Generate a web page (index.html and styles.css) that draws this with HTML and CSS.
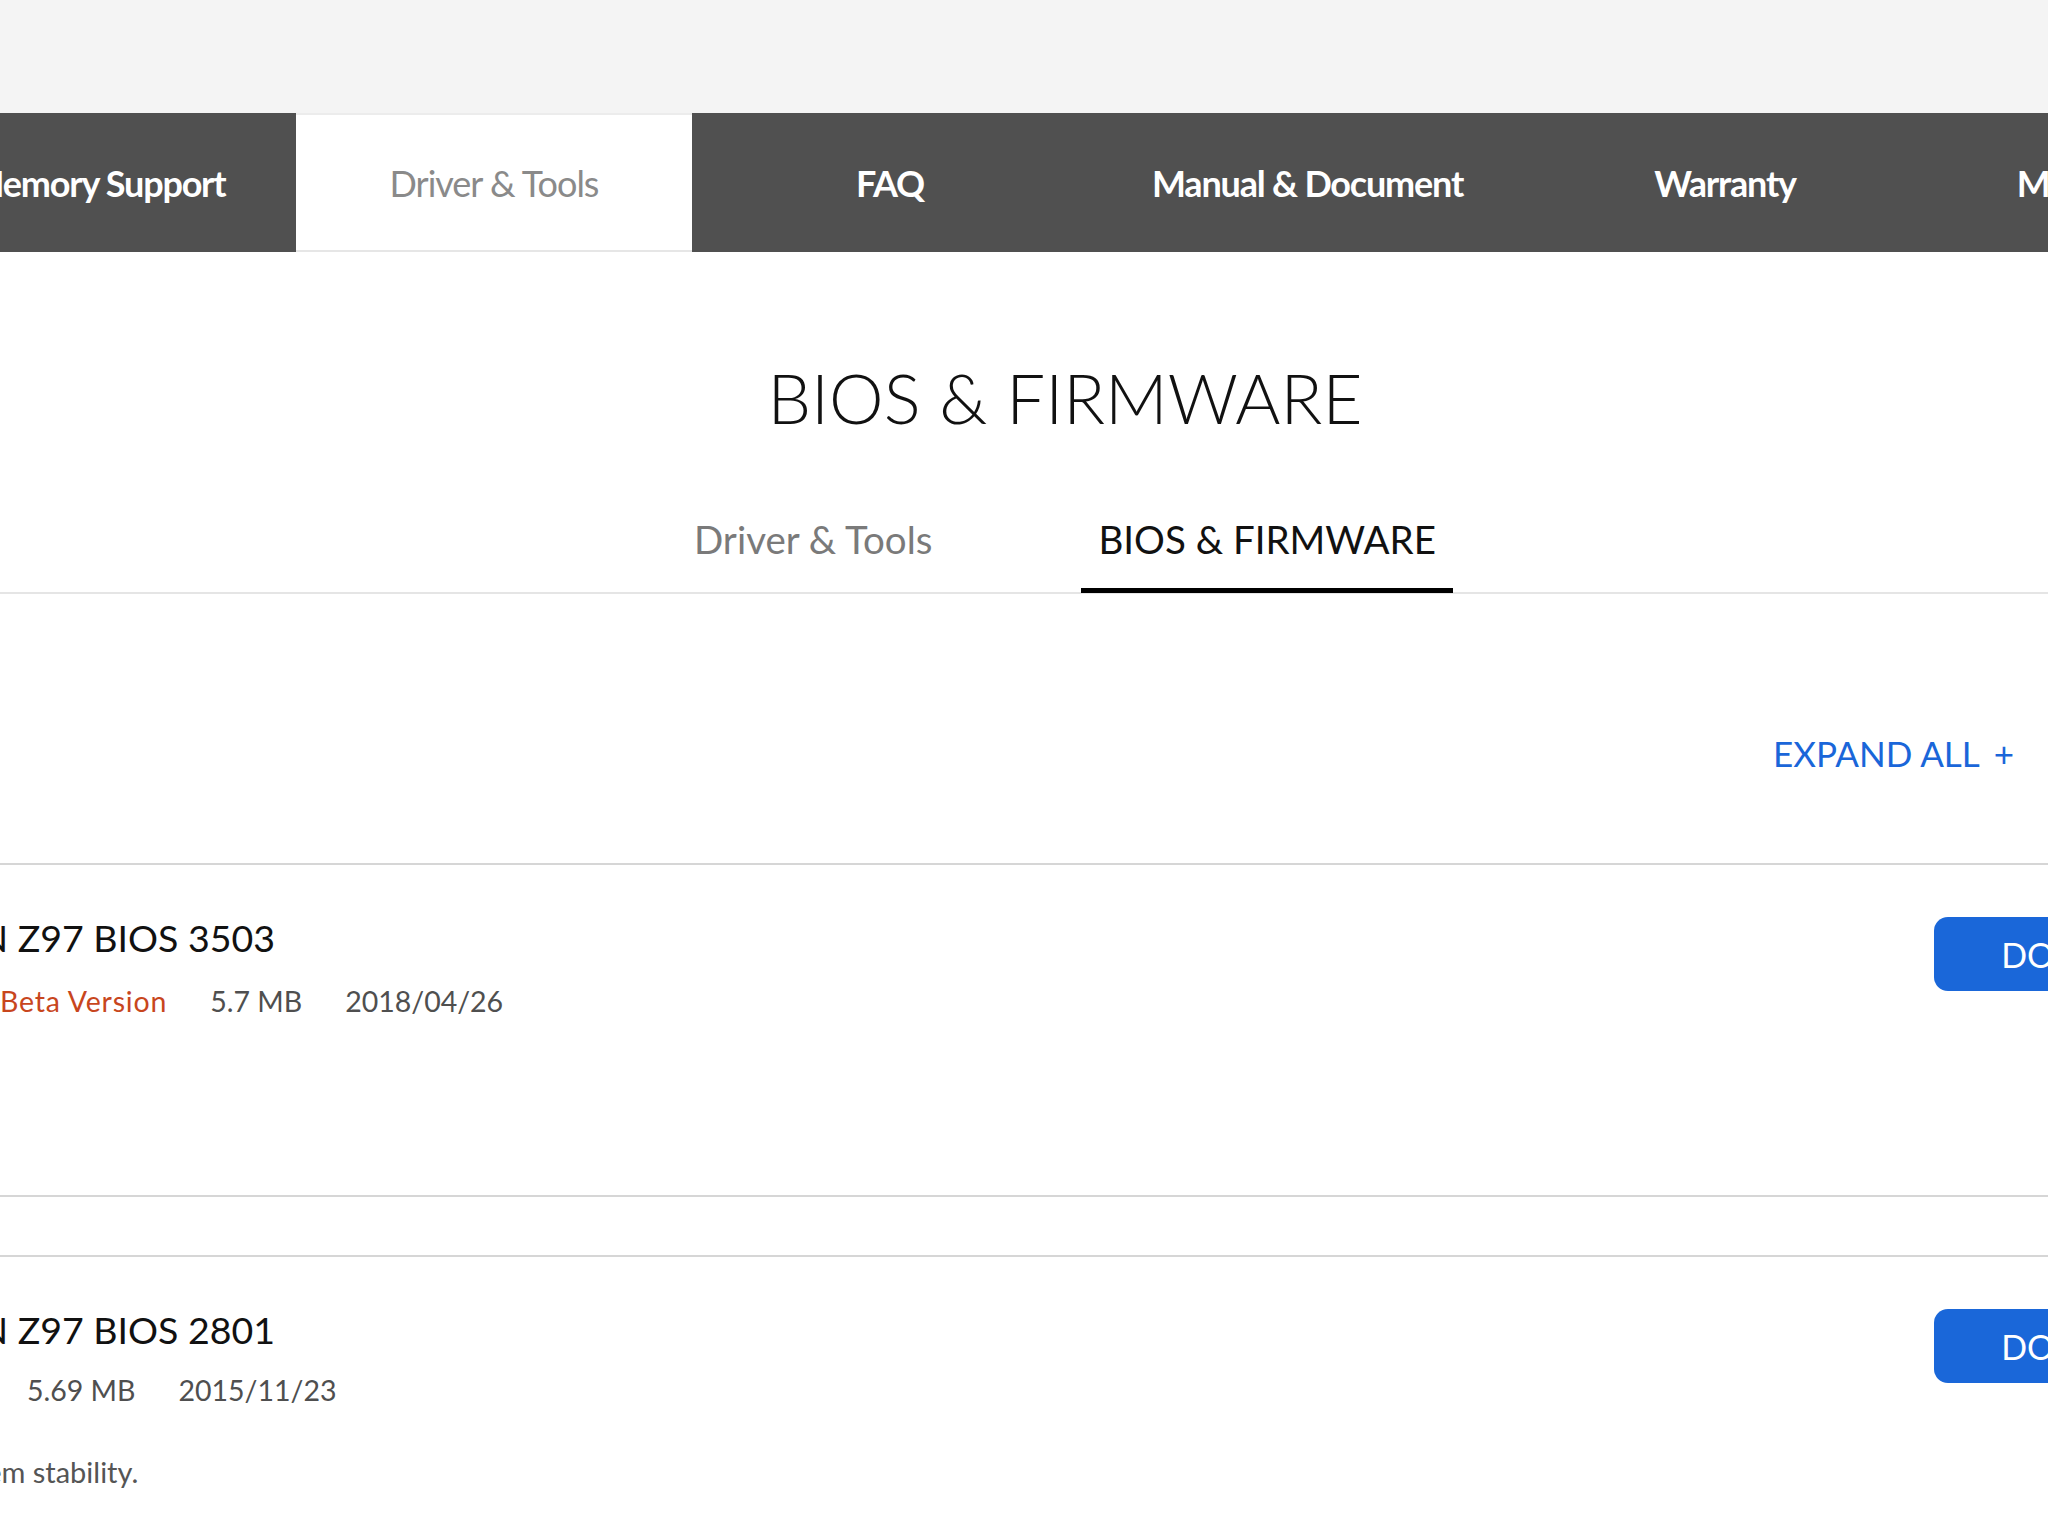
FILE: index.html
```html
<!DOCTYPE html>
<html lang="en">
<head>
    <meta charset="UTF-8">
    <meta name="viewport" content="width=device-width, initial-scale=1.0">
    <title>GRYPHON Z97 - Driver &amp; Tools</title>
    <link rel="stylesheet" href="styles.css">
</head>
<body>
    <div class="topbar"></div>

    <nav class="support-nav">
        <a class="nav-tab" href="#">Memory Support</a>
        <a class="nav-tab active" href="#">Driver &amp; Tools</a>
        <a class="nav-tab" href="#">FAQ</a>
        <a class="nav-tab" href="#">Manual &amp; Document</a>
        <a class="nav-tab" href="#">Warranty</a>
        <a class="nav-tab" href="#">More Support</a>
    </nav>

    <div class="content">
        <h1 class="section-title">BIOS &amp; FIRMWARE</h1>

        <div class="sub-tabs">
            <a class="sub-tab" href="#">Driver &amp; Tools</a>
            <a class="sub-tab active" href="#">BIOS &amp; FIRMWARE</a>
        </div>

        <div class="toolbar">
            <a class="expand-all" href="#">EXPAND ALL <span class="plus">+</span></a>
        </div>

        <div class="file-list">
            <div class="file-item">
                <div class="file-info">
                    <div class="file-title">GRYPHON Z97 BIOS 3503</div>
                    <div class="file-meta">
                        <span class="beta">Beta Version</span>
                        <span>5.7 MB</span>
                        <span>2018/04/26</span>
                    </div>
                </div>
                <button class="btn-download">DOWNLOAD</button>
            </div>

            <div class="file-item">
                <div class="file-info">
                    <div class="file-title">GRYPHON Z97 BIOS 2801</div>
                    <div class="file-meta no-tag">
                        <span>5.69 MB</span>
                        <span>2015/11/23</span>
                    </div>
                    <div class="file-desc">Improve system stability.</div>
                </div>
                <button class="btn-download">DOWNLOAD</button>
            </div>
        </div>
    </div>
</body>
</html>
```

FILE: styles.css
```css
html, body {
    margin: 0;
    padding: 0;
}
body {
    font-family: Lato, "Open Sans", Arial, sans-serif;
    background: #fff;
    color: #1a1a1a;
    overflow: hidden;
}
a {
    text-decoration: none;
    color: inherit;
}

.topbar {
    height: 113px;
    background: #f4f4f4;
}

/* main support tabs */
.support-nav {
    display: flex;
    height: 139px;
    margin-left: -100px;
    background: #505050;
}
.nav-tab {
    flex: none;
    display: flex;
    align-items: center;
    justify-content: center;
    box-sizing: border-box;
    min-width: 396px;
    padding: 0 64px;
    color: #fff;
    font-size: 36px;
    font-weight: 700;
    letter-spacing: -1.2px;
    white-space: nowrap;
}
.nav-tab.active {
    background: #fff;
    color: #8a8a8a;
    font-weight: 400;
    letter-spacing: -1px;
    border-top: 2px solid #ececec;
    border-bottom: 2px solid #e6e6e6;
}

.content {
    width: 2418px;
    margin-left: -144px;
}

.section-title {
    margin: 103px 0 0;
    text-align: center;
    font-size: 69px;
    font-weight: 300;
    line-height: 1.25;
    color: #111;
}

.sub-tabs {
    display: flex;
    justify-content: center;
    gap: 132px;
    margin-top: 74px;
    border-bottom: 2px solid #e5e5e5;
}
.sub-tab {
    padding: 0 17px 25px;
    font-size: 38.5px;
    line-height: 1.25;
    color: #7a7a7a;
    border-bottom: 5px solid transparent;
    margin-bottom: -1px;
}
.sub-tab.active {
    color: #111;
    border-bottom-color: #000;
}

.toolbar {
    display: flex;
    justify-content: flex-end;
    padding-right: 260px;
    margin-top: 138px;
}
.expand-all {
    font-size: 35px;
    line-height: 1.2;
    color: #1a66d9;
}
.expand-all .plus {
    margin-left: 6px;
}

.file-list {
    margin-top: 89px;
}
.file-item {
    display: flex;
    align-items: flex-start;
    min-height: 280px;
    padding: 50px 0 0;
    border-top: 2px solid #d6d6d6;
    border-bottom: 2px solid #d6d6d6;
    margin-bottom: 58px;
}
.file-info {
    flex: 1;
    margin-left: -31px;
}
.file-title {
    font-size: 37.5px;
    line-height: 46px;
    color: #111;
}
.file-meta {
    display: flex;
    gap: 43px;
    margin-top: 23px;
    padding-left: 175px;
    font-size: 28.5px;
    line-height: 1.2;
    color: #4f4f4f;
}
.file-meta.no-tag {
    margin-top: 20px;
    padding-left: 202px;
}
.file-meta .beta {
    color: #c8461d;
    letter-spacing: 0.8px;
}
.file-desc {
    margin-top: 47px;
    font-size: 29px;
    line-height: 1.2;
    color: #555;
}

.btn-download {
    flex: none;
    width: 340px;
    height: 74px;
    margin-top: 2px;
    border: none;
    border-radius: 14px;
    background: #1a67d9;
    color: #fff;
    font-family: inherit;
    font-size: 34px;
}
```
